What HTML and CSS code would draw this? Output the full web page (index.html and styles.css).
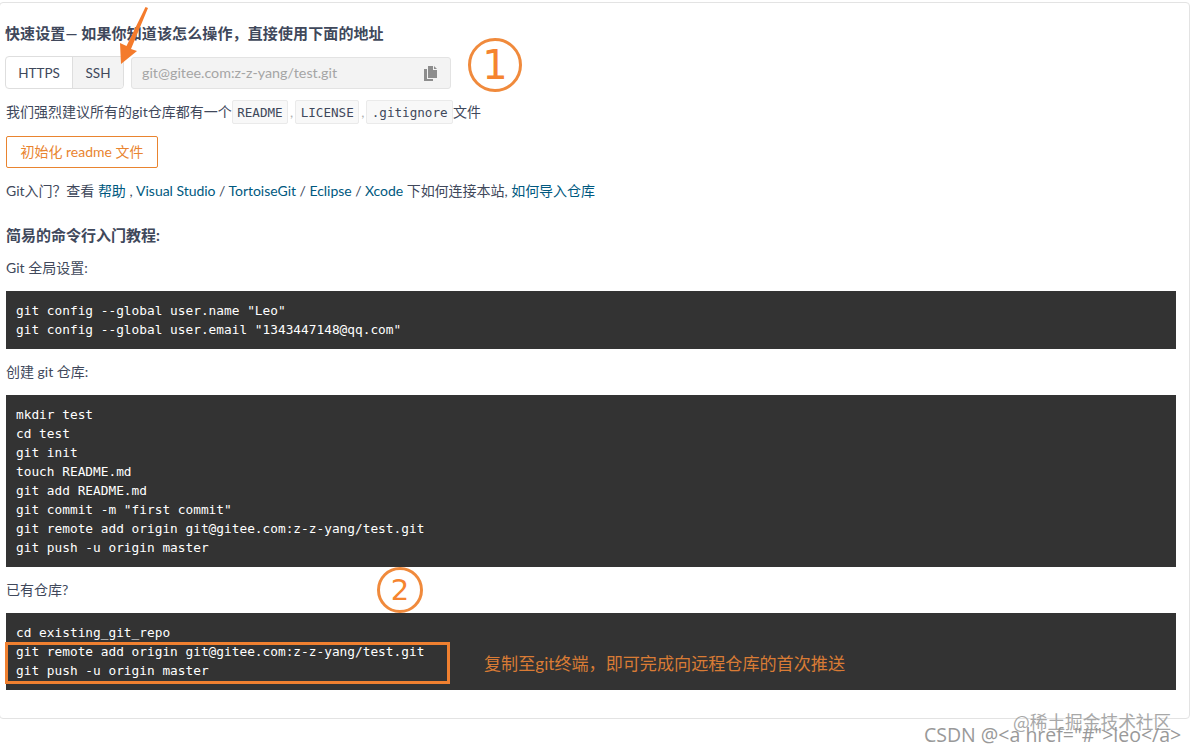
FILE: index.html
```html
<!DOCTYPE html>
<html lang="zh-CN">
<head>
<meta charset="utf-8">
<title>快速设置</title>
<link rel="stylesheet" href="styles.css">
</head>
<body>
<main class="card">
  <h3 class="title">快速设置— 如果你知道该怎么操作，直接使用下面的地址</h3>
  <div class="url-row">
    <div class="tabs">
      <span class="tab">HTTPS</span>
      <span class="tab tab-active">SSH</span>
    </div>
    <div class="url-box">
      <span class="url-text">git@gitee.com:z-z-yang/test.git</span>
      <svg class="copy-icon" viewBox="0 0 13 15" width="13" height="15" aria-hidden="true">
        <path d="M4 0h5v4h4v8H4z"/>
        <path d="M10 0l3 3h-3z"/>
        <path d="M0 3h3v10h6v2H0z"/>
      </svg>
    </div>
  </div>
  <p class="recommend">我们强烈建议所有的git仓库都有一个<code class="chip">README</code><span class="sep">,</span><code class="chip">LICENSE</code><span class="sep">,</span><code class="chip">.gitignore</code>文件</p>
  <button class="init-btn" type="button">初始化 readme 文件</button>
  <p class="help">Git入门？查看 <a href="#">帮助</a> , <a href="#">Visual Studio</a> / <a href="#">TortoiseGit</a> / <a href="#">Eclipse</a> / <a href="#">Xcode</a> 下如何连接本站, <a href="#">如何导入仓库</a></p>
  <h3 class="subtitle">简易的命令行入门教程:</h3>
  <p class="label">Git 全局设置:</p>
  <pre class="code">git config --global user.name "Leo"
git config --global user.email "1343447148@qq.com"</pre>
  <p class="label">创建 git 仓库:</p>
  <pre class="code">mkdir test
cd test
git init
touch README.md
git add README.md
git commit -m "first commit"
git remote add origin git@gitee.com:z-z-yang/test.git
git push -u origin master</pre>
  <p class="label">已有仓库?</p>
  <pre class="code">cd existing_git_repo
git remote add origin git@gitee.com:z-z-yang/test.git
git push -u origin master</pre>
</main>

<svg class="arrow" viewBox="0 0 40 70" width="40" height="70" aria-hidden="true">
  <path d="M34.500 7 L37 8 L20 49 L26 51 L10 64 L9 43 L15.500 46 Z"/>
</svg>
<div class="mark mark-one">1</div>
<div class="mark mark-two">2</div>
<div class="highlight"></div>
<div class="note">复制至git终端，即可完成向远程仓库的首次推送</div>
<div class="wm wm-juejin">@稀土掘金技术社区</div>
<div class="wm wm-csdn">CSDN @&lt;a href="#"&gt;leo&lt;/a&gt;</div>
</body>
</html>
```
FILE: styles.css
```css
* { box-sizing: border-box; }
html, body { margin: 0; height: 753px; overflow: hidden; background: #fff; }
body {
  position: relative;
  padding-top: 2px;
  font-family: Lato, "Noto Sans CJK SC", sans-serif;
  font-size: 14px;
  line-height: 20px;
  color: #40485b;
}
.card {
  width: 1191px;
  height: 717px;
  margin-left: -1px;
  padding: 20px 13px 0 7px;
  border: 1px solid #e3e3e3;
  border-radius: 4px;
}
.title, .subtitle { margin: 0; font-size: 15px; font-weight: 700; line-height: 20px; }
.title { margin-left: -2px; letter-spacing: 0.12px; }
.url-row { display: flex; gap: 7px; margin: 13px 0 0 -1px; }
.tabs { display: flex; height: 33px; border: 1px solid #dedede; border-radius: 4px; margin-left: -1px; font-size: 13.5px; }
.tab { display: flex; align-items: center; justify-content: center; height: 100%; }
.tab:first-child { width: 66px; }
.tab-active { width: 51px; background: #f3f3f3; border-left: 1px solid #dedede; border-radius: 0 4px 4px 0; }
.url-box {
  display: flex; align-items: center; justify-content: space-between;
  width: 320px; height: 32px; margin-top: 1px; padding: 0 13px 0 10px;
  background: #f3f3f3; border: 1px solid #e3e3e3; border-radius: 3px; color: #a5a5a5; font-size: 14.3px;
}
.copy-icon { fill: #8d8d8d; }
.recommend { display: flex; align-items: center; margin: 11px 0 0 -1px; height: 24px; white-space: nowrap; }
.chip {
  display: inline-block; height: 24px; padding: 0 4.500px; margin: 0;
  font-family: "DejaVu Sans Mono", monospace; font-size: 12.6px; line-height: 23px;
  background: #f8f8f8; border: 1px solid #eaeaea; border-radius: 2px; color: #40485b;
}
.sep { width: 7px; text-align: center; color: #b0b0b0; }
.init-btn {
  display: block; width: 152px; height: 32px; margin: 12px 0 0 -1px; padding: 0;
  font: inherit; color: #e9842f; background: #fff; border: 1px solid #e9842f; border-radius: 2px;
}
.help { margin: 13px 0 0 -1px; white-space: nowrap; letter-spacing: -0.03px; }
.help a { color: #005980; text-decoration: none; }
.subtitle { margin-top: 24px; margin-left: -1px; }
.label { margin: 13px 0 13px -1px; }
.code {
  margin: 0 0 0 -1px; padding: 10px;
  font-family: "DejaVu Sans Mono", monospace; font-size: 12.8px; line-height: 19px;
  color: #fff; background: #333;
}
.arrow { position: absolute; left: 111px; top: 0; fill: #f47b2c; }
.mark {
  position: absolute; display: flex; align-items: center; justify-content: center;
  border-style: solid; border-color: #f08a3c; border-radius: 50%; color: #f58430;
  font-family: "DejaVu Sans", sans-serif;
}
.mark-one { left: 468px; top: 38px; width: 54px; height: 54px; border-width: 3px; font-size: 40px; }
.mark-two { left: 377px; top: 567px; width: 46px; height: 46px; border-width: 3px; font-size: 29px; }
.highlight { position: absolute; left: 5px; top: 642px; width: 445px; height: 42px; border: 3px solid #f08030; }
.note { position: absolute; left: 484px; top: 652px; font-size: 17.1px; line-height: 24px; color: #d97b35; white-space: nowrap; }
.wm { position: absolute; white-space: nowrap; color: #a8a8a8; }
.wm-juejin { left: 1013px; top: 709px; font-family: "Noto Sans CJK SC", sans-serif; font-size: 17.7px; line-height: 24px; }
.wm-csdn { left: 924px; top: 723px; font-family: "Open Sans", sans-serif; font-size: 19.5px; line-height: 24px; color: #999; }
```
